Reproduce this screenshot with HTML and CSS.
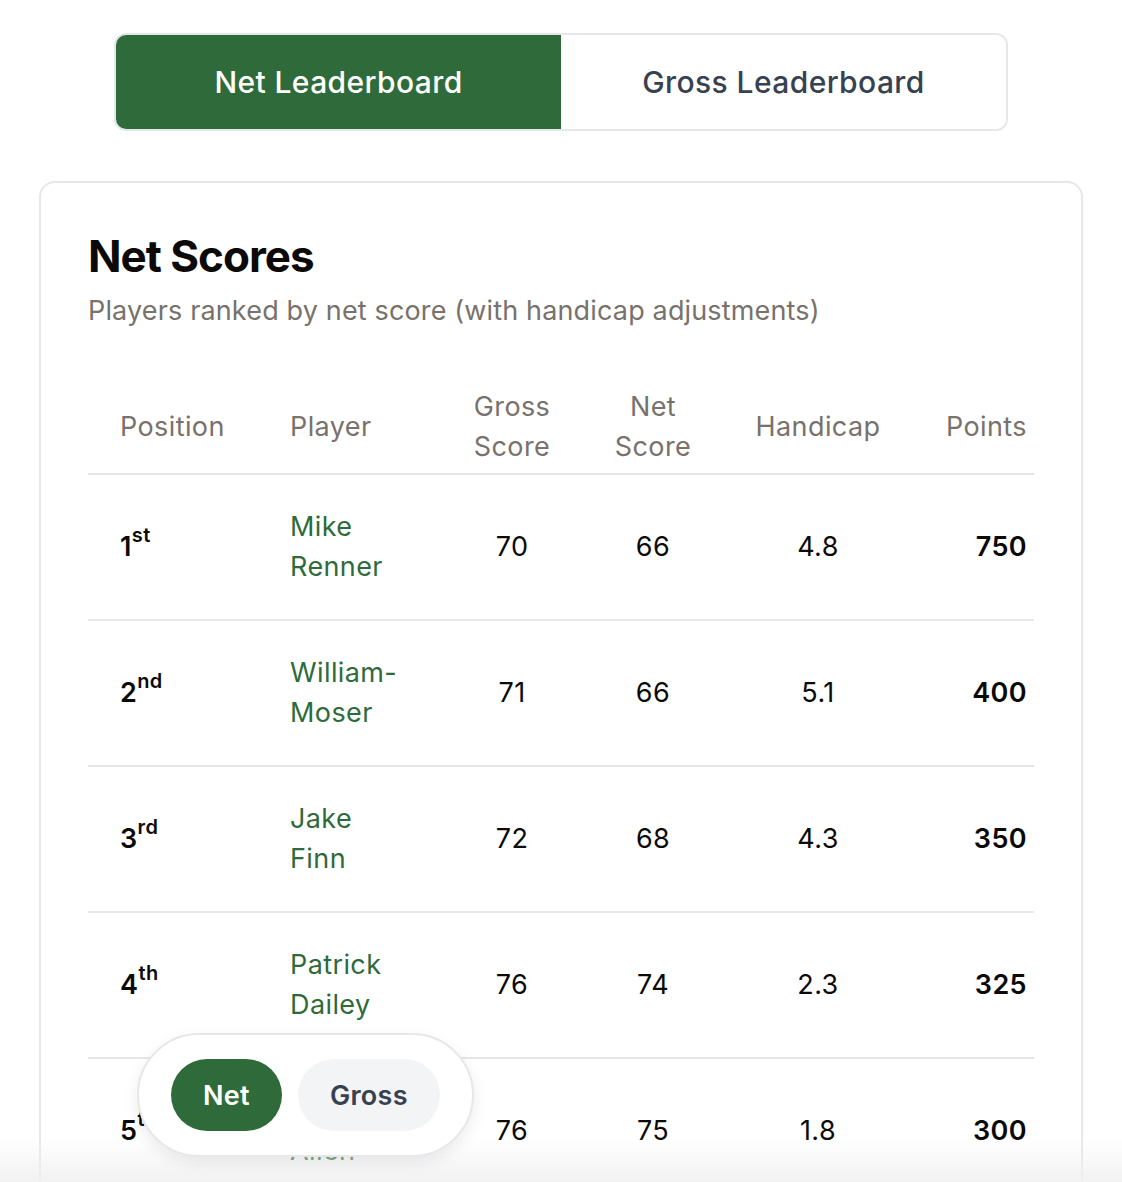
FILE: index.html
```html
<!DOCTYPE html>
<html lang="en">
<head>
<meta charset="utf-8">
<title>Leaderboard</title>
<link rel="stylesheet" href="styles.css">
</head>
<body>
<div class="page">
  <div class="tabs">
    <button class="tab tab-active">Net Leaderboard</button>
    <button class="tab">Gross Leaderboard</button>
  </div>

  <section class="card">
    <h1 class="title">Net Scores</h1>
    <p class="subtitle">Players ranked by net score (with handicap adjustments)</p>

    <table class="board">
      <colgroup>
        <col class="c-pos"><col class="c-player"><col class="c-gross"><col class="c-net"><col class="c-hcp"><col class="c-pts">
      </colgroup>
      <thead>
        <tr>
          <th class="left">Position</th>
          <th class="left">Player</th>
          <th>Gross Score</th>
          <th>Net Score</th>
          <th>Handicap</th>
          <th class="right">Points</th>
        </tr>
      </thead>
      <tbody>
        <tr>
          <td class="pos">1<sup>st</sup></td>
          <td class="player">Mike Renner</td>
          <td>70</td><td>66</td><td>4.8</td>
          <td class="pts">750</td>
        </tr>
        <tr>
          <td class="pos">2<sup>nd</sup></td>
          <td class="player">William-Moser</td>
          <td>71</td><td>66</td><td>5.1</td>
          <td class="pts">400</td>
        </tr>
        <tr>
          <td class="pos">3<sup>rd</sup></td>
          <td class="player">Jake Finn</td>
          <td>72</td><td>68</td><td>4.3</td>
          <td class="pts">350</td>
        </tr>
        <tr>
          <td class="pos">4<sup>th</sup></td>
          <td class="player">Patrick Dailey</td>
          <td>76</td><td>74</td><td>2.3</td>
          <td class="pts">325</td>
        </tr>
        <tr>
          <td class="pos">5<sup>th</sup></td>
          <td class="player">Chris Allen</td>
          <td>76</td><td>75</td><td>1.8</td>
          <td class="pts">300</td>
        </tr>
      </tbody>
    </table>
  </section>
</div>

<div class="fade"></div>

<div class="pill">
  <button class="pill-btn pill-active">Net</button>
  <button class="pill-btn">Gross</button>
</div>
</body>
</html>
```

FILE: styles.css
```css
* { box-sizing: border-box; }

html, body {
  margin: 0;
  padding: 0;
  background: #ffffff;
  font-family: "Inter", "Noto Sans", "Liberation Sans", sans-serif;
  color: #0c0a09;
}

.page {
  width: 1044px;
  margin: 0 0 0 39px;
  padding-top: 33px;
}

.tabs {
  display: flex;
  width: 894px;
  height: 98px;
  margin: 0 auto;
  border: 2px solid #e5e7eb;
  border-radius: 12px;
  overflow: hidden;
}

.tab {
  flex: 1;
  border: 0;
  background: #ffffff;
  color: #374151;
  font-family: inherit;
  font-size: 30px;
  font-weight: 500;
  letter-spacing: 0.4px;
  padding: 0;
  cursor: pointer;
}

.tab-active {
  background: #2f6b3a;
  color: #ffffff;
}

.card {
  margin-top: 50px;
  border: 2px solid #e5e7eb;
  border-radius: 16px;
  padding: 45px 47px 0 47px;
  min-height: 1100px;
}

.title {
  margin: 0;
  font-size: 44px;
  font-weight: 700;
  letter-spacing: -1px;
  line-height: 56px;
}

.subtitle {
  margin: 10px 0 0 0;
  font-size: 27px;
  letter-spacing: 0.15px;
  line-height: 34px;
  color: #78716c;
}

.board {
  width: 946px;
  margin-top: 53px;
  border-collapse: collapse;
  table-layout: fixed;
  font-size: 27px;
  letter-spacing: 0.4px;
}

.c-pos { width: 170px; }
.c-player { width: 170px; }
.c-gross { width: 168px; }
.c-net { width: 114px; }
.c-hcp { width: 216px; }
.c-pts { width: 108px; }

.board th {
  font-weight: 400;
  color: #78716c;
  line-height: 40px;
  height: 93px;
  padding: 0 10px;
  text-align: center;
  border-bottom: 2px solid #e5e7eb;
  vertical-align: middle;
}

.board th.left { text-align: left; padding-left: 32px; }
.board th.right { text-align: right; padding-right: 7px; }

.board td {
  height: 146px;
  line-height: 40px;
  text-align: center;
  vertical-align: middle;
  border-bottom: 2px solid #e5e7eb;
  padding: 0 10px;
}

.board td.pos {
  text-align: left;
  padding-left: 32px;
  font-weight: 600;
}

.board td.pos sup {
  font-size: 20px;
  line-height: 0;
  vertical-align: 14px;
}

.board td.player {
  text-align: left;
  padding-left: 32px;
  padding-right: 26px;
  color: #2f6b3a;
}

.board td.pts {
  text-align: right;
  padding-right: 7px;
  font-weight: 600;
}

.fade {
  position: fixed;
  left: 0;
  right: 0;
  bottom: 0;
  height: 44px;
  background: linear-gradient(to bottom, rgba(245,245,245,0), rgba(240,240,240,0.9));
  pointer-events: none;
}

.pill {
  position: fixed;
  left: 137px;
  bottom: 25px;
  display: flex;
  gap: 16px;
  padding: 24px 32px;
  background: #ffffff;
  border: 2px solid #e5e7eb;
  border-radius: 62px;
  box-shadow: 0 6px 16px rgba(0,0,0,0.08);
}

.pill-btn {
  height: 72px;
  border: 0;
  border-radius: 36px;
  background: #f3f4f6;
  color: #374151;
  font-family: inherit;
  font-size: 27px;
  font-weight: 600;
  letter-spacing: 0.3px;
  padding: 0 32px;
  cursor: pointer;
}

.pill-active {
  background: #2f6b3a;
  color: #ffffff;
}
```
